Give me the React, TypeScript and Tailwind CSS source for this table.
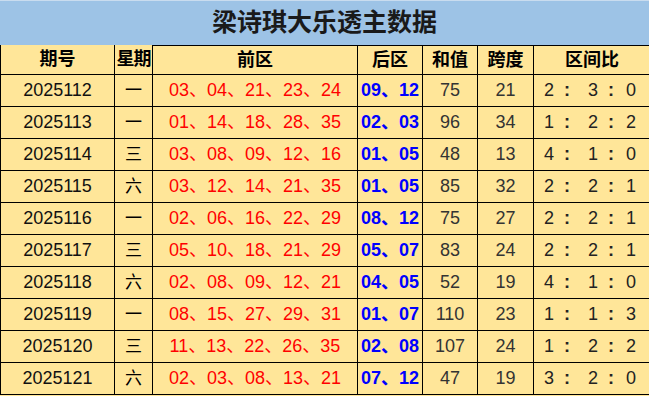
const rows = [
  { no: '2025112', day: '一', front: ['03', '04', '21', '23', '24'], back: ['09', '12'], sum: '75', span: '21', ratio: ['2', '3', '0'] },
  { no: '2025113', day: '一', front: ['01', '14', '18', '28', '35'], back: ['02', '03'], sum: '96', span: '34', ratio: ['1', '2', '2'] },
  { no: '2025114', day: '三', front: ['03', '08', '09', '12', '16'], back: ['01', '05'], sum: '48', span: '13', ratio: ['4', '1', '0'] },
  { no: '2025115', day: '六', front: ['03', '12', '14', '21', '35'], back: ['01', '05'], sum: '85', span: '32', ratio: ['2', '2', '1'] },
  { no: '2025116', day: '一', front: ['02', '06', '16', '22', '29'], back: ['08', '12'], sum: '75', span: '27', ratio: ['2', '2', '1'] },
  { no: '2025117', day: '三', front: ['05', '10', '18', '21', '29'], back: ['05', '07'], sum: '83', span: '24', ratio: ['2', '2', '1'] },
  { no: '2025118', day: '六', front: ['02', '08', '09', '12', '21'], back: ['04', '05'], sum: '52', span: '19', ratio: ['4', '1', '0'] },
  { no: '2025119', day: '一', front: ['08', '15', '27', '29', '31'], back: ['01', '07'], sum: '110', span: '23', ratio: ['1', '1', '3'] },
  { no: '2025120', day: '三', front: ['11', '13', '22', '26', '35'], back: ['02', '08'], sum: '107', span: '24', ratio: ['1', '2', '2'] },
  { no: '2025121', day: '六', front: ['02', '03', '08', '13', '21'], back: ['07', '12'], sum: '47', span: '19', ratio: ['3', '2', '0'] },
];

const cols = 'grid grid-cols-[114px_38px_205px_65px_55px_56px_116px]';
const cell = 'flex items-center justify-center border-r border-b border-black';

export default function App() {
  return (
    <div
      className="w-[649px] h-[396px] overflow-hidden bg-[#ffe699] text-[18px] text-black"
      style={{ fontFamily: '"Liberation Sans", "Noto Sans CJK SC", sans-serif' }}
    >
      {/* Title */}
      <div className="flex h-[45px] items-center justify-center border-t border-[#c9dcef] bg-[#9dc3e6] text-[25px] font-bold text-[#1a1a1a]">
        梁诗琪大乐透主数据
      </div>

      <div className="border-l border-black">
        {/* Header */}
        <div className={`${cols} h-[30px] font-bold`}>
          <div className={cell}>期号</div>
          <div className={`${cell} tracking-[-1px]`}>星期</div>
          <div className={`${cell} border-t`}>前区</div>
          <div className={`${cell} border-t`}>后区</div>
          <div className={`${cell} border-t`}>和值</div>
          <div className={`${cell} border-t`}>跨度</div>
          <div className={`${cell} border-t border-r-0`}>区间比</div>
        </div>

        {/* Data rows */}
        {rows.map((r) => (
          <div key={r.no} className={`${cols} h-[32px]`}>
            <div className={`${cell} text-[#111]`}>{r.no}</div>
            <div className={`${cell} text-[17px]`}>{r.day}</div>
            <div className={`${cell} text-[#ff0000]`}>{r.front.join('、')}</div>
            <div className={`${cell} font-bold text-[#0000ff]`}>{r.back.join('、')}</div>
            <div className={`${cell} text-[#333]`}>{r.sum}</div>
            <div className={`${cell} text-[#333]`}>{r.span}</div>
            <div className="flex items-center border-b border-black pl-[10px] text-[#222]">
              <span className="w-[20px]">{r.ratio[0]}</span>
              <span className="w-[24px] font-bold">:</span>
              <span className="w-[20px]">{r.ratio[1]}</span>
              <span className="w-[18px] font-bold">:</span>
              <span>{r.ratio[2]}</span>
            </div>
          </div>
        ))}
      </div>
    </div>
  );
}
